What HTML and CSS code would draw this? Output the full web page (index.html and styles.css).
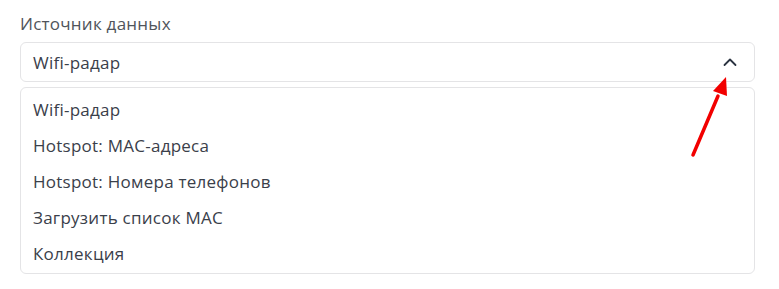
FILE: index.html
```html
<!DOCTYPE html>
<html lang="ru">
<head>
<meta charset="utf-8">
<link rel="stylesheet" href="styles.css">
</head>
<body>
<div class="field">
  <div class="label">Источник данных</div>
  <div class="select">
    <span class="value">Wifi-радар</span>
    <svg class="chev" width="14" height="10" viewBox="0 0 14 10"><path d="M1.5 8 L7 2.5 L12.5 8" fill="none" stroke="#2b3441" stroke-width="1.8" stroke-linecap="round" stroke-linejoin="round"/></svg>
  </div>
  <ul class="menu">
    <li>Wifi-радар</li>
    <li>Hotspot: MAC-адреса</li>
    <li>Hotspot: Номера телефонов</li>
    <li>Загрузить список MAC</li>
    <li>Коллекция</li>
  </ul>
  <svg class="arrow" width="779" height="289" viewBox="0 0 779 289"><line x1="693" y1="155" x2="718" y2="96" stroke="#f20000" stroke-width="3.5" stroke-linecap="round"/><polygon points="726,77 727,96 713,91" fill="#f20000"/></svg>
</div>
</body>
</html>
```
FILE: styles.css
```css
* { box-sizing: border-box; }
html, body { margin: 0; padding: 0; background: #fff; }
body { font-family: "Open Sans", "Noto Sans", sans-serif; color: #3a404a; letter-spacing: 0.25px; }
.field { position: relative; padding: 12px 24px 0 20px; width: 779px; height: 289px; }
.label { font-size: 17px; line-height: 24px; color: #50545b; margin-bottom: 6px; }
.select { height: 40px; border: 1px solid #e4e4e6; border-radius: 6px; display: flex; align-items: center; justify-content: space-between; padding: 0 17px 0 12px; font-size: 17px; }
.chev { display: block; }
.menu { list-style: none; margin: 5px 0 0; padding: 4px 0 1px; border: 1px solid #e4e4e6; border-radius: 6px; }
.menu li { height: 36px; line-height: 36px; padding-left: 12px; font-size: 17px; }
.arrow { position: absolute; left: 0; top: 0; pointer-events: none; }
```
